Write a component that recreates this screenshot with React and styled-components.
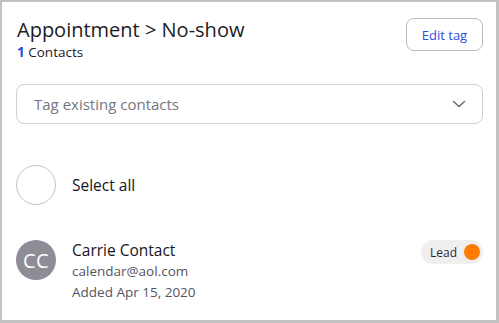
import React from "react";
import styled, { createGlobalStyle } from "styled-components";

const Global = createGlobalStyle`
  html, body { margin: 0; padding: 0; background: #fff; }
  body { font-family: "Open Sans", "Liberation Sans", sans-serif; }
  * { box-sizing: border-box; }
`;

export default function App() {
  return (
    <Frame>
      <Global />
      <Header>
        <div className="titles">
          <h1>Appointment &gt; No-show</h1>
          <p><b>1</b> Contacts</p>
        </div>
        <EditButton>Edit tag</EditButton>
      </Header>
      <Dropdown>
        <span>Tag existing contacts</span>
        <svg width="14" height="8" viewBox="0 0 14 8" fill="none">
          <path d="M1.5 1.5 L7 6.5 L12.5 1.5" stroke="#6f6e78" strokeWidth="1.6" strokeLinecap="round" strokeLinejoin="round" />
        </svg>
      </Dropdown>
      <Row $top={41}>
        <Circle />
        <Label>Select all</Label>
      </Row>
      <Contact>
        <Circle $filled>CC</Circle>
        <div className="info">
          <Label $lh={22}>Carrie Contact</Label>
          <Meta>calendar@aol.com</Meta>
          <Meta>Added Apr 15, 2020</Meta>
        </div>
        <Pill>
          Lead
          <i />
        </Pill>
      </Contact>
    </Frame>
  );
}

const Frame = styled.div`
  width: 499px;
  height: 323px;
  border-style: solid;
  border-color: #c2c2c2;
  border-width: 2px 3px 3px 2px;
  padding: 0 13px 0 14px;
  display: flex;
  flex-direction: column;
  overflow: hidden;
`;

const Header = styled.div`
  display: flex;
  justify-content: space-between;
  align-items: flex-start;
  padding: 16px 0 0 1px;

  h1 {
    margin: -1px 0 0;
    font-weight: 400;
    font-size: 20px;
    line-height: 26px;
    color: #1c1c24;
  }
  p {
    margin: 1px 0 0;
    font-size: 13.5px;
    line-height: 16px;
    color: #1c1c24;
    b { color: #2150e0; font-weight: 700; }
  }
`;

const EditButton = styled.button`
  width: 77px;
  height: 33px;
  border: 1px solid #b9b9c2;
  border-radius: 8px;
  background: #fff;
  color: #2a4bd8;
  font-family: inherit;
  font-size: 13px;
  cursor: pointer;
`;

const Dropdown = styled.div`
  margin-top: 24px;
  height: 40px;
  border: 1px solid #cfcfd4;
  border-radius: 8px;
  display: flex;
  align-items: center;
  justify-content: space-between;
  padding: 0 16px 0 17px;
  span {
    font-size: 15px;
    color: #77767f;
  }
`;

const Row = styled.div`
  margin-top: ${(p) => p.$top}px;
  display: flex;
  align-items: center;
  gap: 16px;
`;

const Contact = styled.div`
  margin-top: 35px;
  display: flex;
  align-items: flex-start;
  gap: 16px;
  .info {
    flex: 1;
    display: flex;
    flex-direction: column;
    margin-top: -1px;
  }
`;

const Circle = styled.div`
  width: 40px;
  height: 40px;
  border-radius: 50%;
  flex: none;
  border: ${(p) => (p.$filled ? "none" : "1px solid #c4c4cc")};
  background: ${(p) => (p.$filled ? "#8e8d96" : "#fff")};
  color: #fff;
  font-size: 20px;
  display: flex;
  align-items: center;
  justify-content: center;
  letter-spacing: 0.5px;
`;

const Label = styled.div`
  font-size: 15.5px;
  line-height: ${(p) => p.$lh || 20}px;
  color: #15151c;
`;

const Meta = styled.div`
  font-size: 13.5px;
  line-height: 21px;
  color: #55545e;
`;

const Pill = styled.div`
  display: flex;
  align-items: center;
  gap: 7px;
  height: 24px;
  padding: 0 3px 0 9px;
  border-radius: 12px;
  background: #efeff0;
  font-size: 12px;
  color: #2b2b33;
  i {
    width: 16px;
    height: 16px;
    border-radius: 50%;
    background: #ff7a00;
  }
`;
